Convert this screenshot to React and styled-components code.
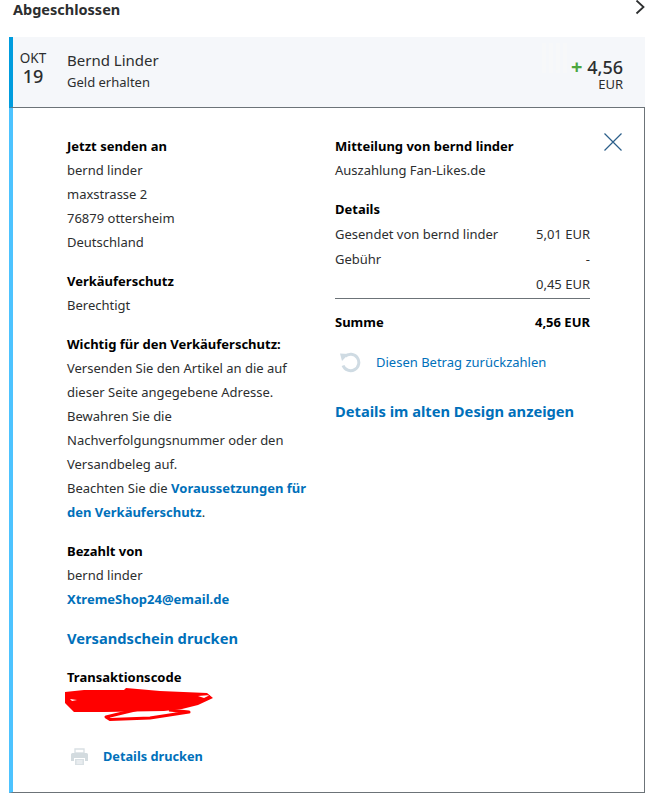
import React from "react";
import styled, { createGlobalStyle } from "styled-components";

const GlobalStyle = createGlobalStyle`
  html, body {
    margin: 0;
    padding: 0;
    background: #ffffff;
  }
  body {
    font-family: "Noto Sans", "Open Sans", sans-serif;
    font-size: 13px;
    color: #2c2e2f;
  }
`;

const addressLines = ["bernd linder", "maxstrasse 2", "76879 ottersheim", "Deutschland"];

const App = () => {
  return (
    <Page>
      <GlobalStyle />
      <TopBar>
        <Title>Abgeschlossen</Title>
        <svg width="10" height="16" viewBox="0 0 10 16" fill="none">
          <path d="M1.5 1.5 L8.5 8 L1.5 14.5" stroke="#2c2e2f" strokeWidth="1.8" />
        </svg>
      </TopBar>
      <Card>
        <CardHeader>
          <Smudge />
          <DateBox>
            <Month>OKT</Month>
            <Day>19</Day>
          </DateBox>
          <Party>
            <Name>Bernd Linder</Name>
            <Kind>Geld erhalten</Kind>
          </Party>
          <Amount>
            <Value>
              <Plus>+</Plus> 4,56
            </Value>
            <Currency>EUR</Currency>
          </Amount>
        </CardHeader>
        <CardBody>
          <CloseButton>
            <svg width="20" height="20" viewBox="0 0 20 20" fill="none">
              <path d="M1.5 1.5 L18.5 18.5 M18.5 1.5 L1.5 18.5" stroke="#2c5f8a" strokeWidth="1.2" />
            </svg>
          </CloseButton>
          <Column>
            <Block>
              <Heading>Jetzt senden an</Heading>
              {addressLines.map((line) => (
                <Line key={line}>{line}</Line>
              ))}
            </Block>
            <Block>
              <Heading>Verkäuferschutz</Heading>
              <Line>Berechtigt</Line>
            </Block>
            <Block>
              <Heading>Wichtig für den Verkäuferschutz:</Heading>
              <Line>
                Versenden Sie den Artikel an die auf
                <br />
                dieser Seite angegebene Adresse.
                <br />
                Bewahren Sie die
                <br />
                Nachverfolgungsnummer oder den
                <br />
                Versandbeleg auf.
                <br />
                Beachten Sie die <BoldLink>Voraussetzungen für</BoldLink>
                <br />
                <BoldLink>den Verkäuferschutz</BoldLink>.
              </Line>
            </Block>
            <Block>
              <Heading>Bezahlt von</Heading>
              <Line>bernd linder</Line>
              <Line>
                <BoldLink>XtremeShop24@email.de</BoldLink>
              </Line>
            </Block>
            <BigLink>Versandschein drucken</BigLink>
            <CodeBlock>
              <Heading>Transaktionscode</Heading>
              <Scribble width="150" height="34" viewBox="0 0 150 34" fill="none">
                <path
                  fillRule="evenodd"
                  d="M1 5 L20 3 L60 3 L62 1 L96 4 L143 6 L149 11 L134 18 L118 22 L100 24 L40 25 L10 25 L1 16 Z M134 9 L146 8 L140 11 Z M6 12 L13 13 L8 14 Z"
                  fill="#ff0000"
                />
                <path
                  d="M75 22 L42 30 L46 32.5 L86 31 L125 25 L105 23"
                  stroke="#ff0000"
                  strokeWidth="3"
                  strokeLinejoin="round"
                />
              </Scribble>
            </CodeBlock>
            <PrintRow>
              <svg width="17" height="17" viewBox="0 0 17 17">
                <path d="M4 1 H13 V5 H4 Z" fill="none" stroke="#d9e0e4" strokeWidth="1.4" />
                <path d="M1.5 5 H15.5 Q17 5 17 6.5 V13 H14 V10 H3 V13 H0 V6.5 Q0 5 1.5 5 Z" fill="#d3dbdf" />
                <path d="M4 11 H13 V17 H4 Z" fill="#d9e0e4" />
                <path d="M5.5 13 H11.5 M5.5 15 H11.5" stroke="#ffffff" strokeWidth="0.8" />
              </svg>
              <PrintLink>Details drucken</PrintLink>
            </PrintRow>
          </Column>
          <Column>
            <Block>
              <Heading>Mitteilung von bernd linder</Heading>
              <Line>Auszahlung Fan-Likes.de</Line>
            </Block>
            <DetailsBlock>
              <Heading>Details</Heading>
              <Row>
                <span>Gesendet von bernd linder</span>
                <span>5,01 EUR</span>
              </Row>
              <Row>
                <span>Gebühr</span>
                <span>-</span>
              </Row>
              <Row>
                <span />
                <span>0,45 EUR</span>
              </Row>
              <TotalRow>
                <span>Summe</span>
                <span>4,56 EUR</span>
              </TotalRow>
            </DetailsBlock>
            <RefundRow>
              <svg width="22" height="22" viewBox="0 0 22 22" fill="none">
                <path d="M6 5.5 A8.2 8.2 0 1 1 4 14.5" stroke="#cfdbe3" strokeWidth="3" />
                <path d="M1 2.5 L9.5 3 L3 10 Z" fill="#cfdbe3" />
              </svg>
              <RefundLink>Diesen Betrag zurückzahlen</RefundLink>
            </RefundRow>
            <BigLink>Details im alten Design anzeigen</BigLink>
          </Column>
        </CardBody>
      </Card>
    </Page>
  );
};

const Page = styled.div`
  width: 652px;
  height: 800px;
  overflow: hidden;
`;

const TopBar = styled.div`
  display: flex;
  align-items: flex-start;
  justify-content: space-between;
  height: 37px;
  padding: 0 7px 0 13px;
  box-sizing: border-box;

  svg {
    margin-top: -1px;
  }
`;

const Title = styled.div`
  margin-top: -2px;
  font-size: 14.5px;
  font-weight: 700;
  line-height: 22px;
`;

const Card = styled.div`
  width: 636px;
  margin-left: 9px;
  box-sizing: border-box;
`;

const CardHeader = styled.div`
  position: relative;
  display: flex;
  align-items: center;
  height: 71px;
  padding-right: 22px;
  box-sizing: border-box;
  background: #f5f7fa;
  border-left: 4px solid #009cde;
  border-bottom: 1px solid #6c7378;
`;

/* pale leftover stripes next to the amount */
const Smudge = styled.div`
  position: absolute;
  top: 6px;
  right: 75px;
  width: 28px;
  height: 30px;
  background: repeating-linear-gradient(90deg, #f7f8f9 0 4px, #f5f7fa 4px 7px);
`;

const DateBox = styled.div`
  width: 40px;
  margin-right: 14px;
  padding-bottom: 8px;
  text-align: center;
`;

const Month = styled.div`
  font-size: 13.5px;
  line-height: 15px;
`;

const Day = styled.div`
  font-size: 18px;
  font-weight: 500;
  line-height: 20px;
`;

const Party = styled.div`
  flex: 1;
  padding-bottom: 4px;
`;

const Name = styled.div`
  font-size: 15px;
  line-height: 24px;
`;

const Kind = styled.div`
  font-size: 13px;
  line-height: 20px;
`;

const Amount = styled.div`
  position: relative;
  text-align: right;
  padding-top: 4px;
`;

const Value = styled.div`
  font-size: 18px;
  font-weight: 500;
  line-height: 20px;
`;

const Plus = styled.span`
  color: #4ca63f;
  font-size: 20px;
  font-weight: 700;
`;

const Currency = styled.div`
  font-size: 13px;
  line-height: 15px;
`;

const CardBody = styled.div`
  position: relative;
  display: grid;
  grid-template-columns: 268px 255px;
  align-items: start;
  height: 685px;
  padding: 26px 0 0 54px;
  box-sizing: border-box;
  border-left: 4px solid #4dc3ff;
  border-right: 1px solid #6c7378;
  border-bottom: 1px solid #6c7378;
`;

const CloseButton = styled.div`
  position: absolute;
  top: 24px;
  right: 21px;
  line-height: 0;
`;

const Column = styled.div`
  display: flex;
  flex-direction: column;
  align-items: stretch;
`;

const Block = styled.div`
  margin-bottom: 15px;
`;

const Heading = styled.div`
  font-size: 13px;
  font-weight: 700;
  line-height: 24px;
  color: #000000;
`;

const Line = styled.div`
  font-size: 13px;
  line-height: 24px;
`;

const BoldLink = styled.span`
  font-weight: 700;
  color: #0070ba;
`;

const BigLink = styled.div`
  font-size: 14.7px;
  font-weight: 700;
  line-height: 24px;
  color: #0070ba;
`;

const CodeBlock = styled.div`
  margin-top: 15px;
`;

const Scribble = styled.svg`
  display: block;
  margin-top: -2px;
  margin-left: -3px;
`;

const PrintRow = styled.div`
  display: flex;
  align-items: center;
  gap: 15px;
  margin-top: 26px;
  margin-left: 4px;
`;

const PrintLink = styled.span`
  font-size: 12.75px;
  font-weight: 700;
  color: #0070ba;
`;

const DetailsBlock = styled.div`
  margin-bottom: 16px;

  ${Heading} {
    margin-bottom: 1px;
  }
`;

const Row = styled.div`
  display: flex;
  justify-content: space-between;
  font-size: 13px;
  line-height: 25px;
`;

const TotalRow = styled(Row)`
  margin-top: 1px;
  padding-top: 11px;
  border-top: 1px solid #6c7378;
  font-weight: 700;
  color: #000000;
`;

const RefundRow = styled.div`
  display: flex;
  align-items: center;
  gap: 15px;
  margin-bottom: 26px;
  margin-left: 4px;
`;

const RefundLink = styled.span`
  font-size: 13px;
  color: #0070ba;
`;

export default App;
